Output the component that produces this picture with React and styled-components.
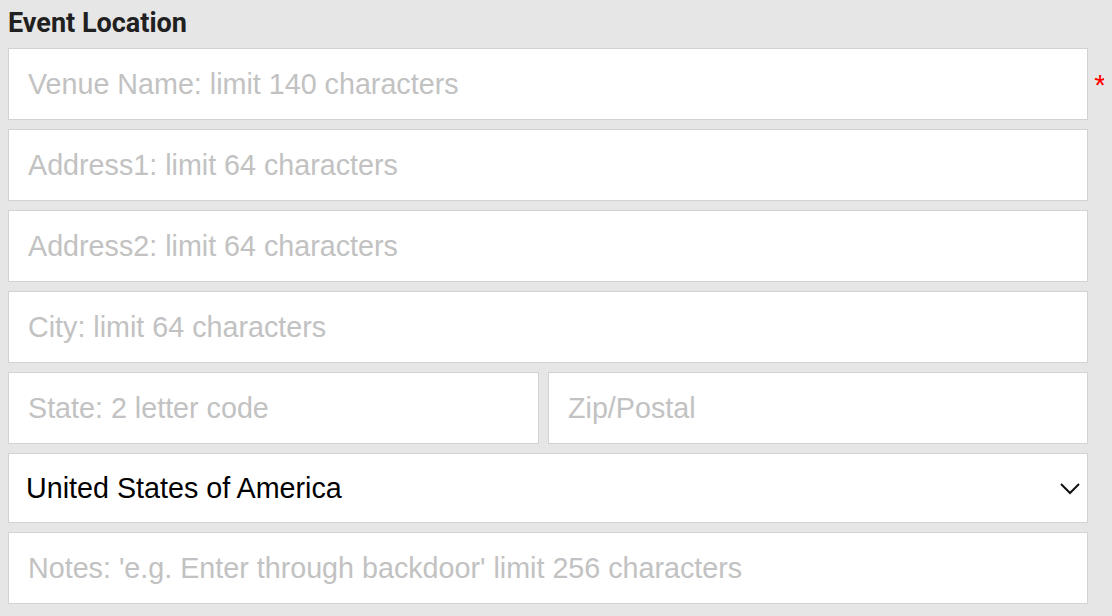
import React from 'react';
import styled, { createGlobalStyle } from 'styled-components';

//ESTILO
const Global = createGlobalStyle`
    body {
        margin: 8px;
        background: #e6e6e6;
        font-family: "Liberation Sans", Arial, sans-serif;
    }
`
const Form = styled.div`
    display: flex;
    flex-direction: column;
    gap: 9px;
    width: 1104px;
`
const Titulo = styled.h3`
    font-family: Roboto, "Liberation Sans", sans-serif;
    font-weight: 700;
    font-size: 27px;
    line-height: 30px;
    color: #202020;
    margin: 0 0 1px 0;
`
const Linha = styled.div`
    display: flex;
    align-items: center;
    gap: 9px;
    padding-right: 24px;
    position: relative;
`
const Campo = styled.input`
    flex: ${props => props.w ? `0 0 ${props.w}px` : 1};
    min-width: 0;
    box-sizing: border-box;
    height: 72px;
    padding: 0 19px;
    border: 1px solid #d2d2d2;
    background: #fff;
    font-family: "Liberation Sans", Arial, sans-serif;
    font-size: 28.7px;
    color: #000;
    outline: 0;

    &::placeholder {
        color: #c2c2c2;
    }
`
const Obrigatorio = styled.span`
    position: absolute;
    right: 6px;
    top: 22px;
    color: #f00;
    font-size: 30px;
    line-height: 30px;
    font-family: "Liberation Sans", Arial, sans-serif;
`
const Caixa = styled.div`
    flex: 1;
    position: relative;
`
const Selecao = styled.select`
    width: 100%;
    box-sizing: border-box;
    height: 70px;
    padding: 0 17px;
    border: 1px solid #d2d2d2;
    background: #fff;
    font-family: "Liberation Sans", Arial, sans-serif;
    font-size: 28.7px;
    color: #000;
    appearance: none;
    outline: 0;
`
const Seta = styled.svg`
    position: absolute;
    right: 8px;
    top: 29px;
    pointer-events: none;
`

//COMPONENTE
export default function App() {
    return (
        <>
            <Global />
            <Form>
                <Titulo>Event Location</Titulo>
                <Linha>
                    <Campo placeholder="Venue Name: limit 140 characters" />
                    <Obrigatorio>*</Obrigatorio>
                </Linha>
                <Linha>
                    <Campo placeholder="Address1: limit 64 characters" />
                </Linha>
                <Linha>
                    <Campo placeholder="Address2: limit 64 characters" />
                </Linha>
                <Linha>
                    <Campo placeholder="City: limit 64 characters" />
                </Linha>
                <Linha>
                    <Campo w={531} placeholder="State: 2 letter code" />
                    <Campo placeholder="Zip/Postal" />
                </Linha>
                <Linha>
                    <Caixa>
                        <Selecao defaultValue="US">
                            <option value="US">United States of America</option>
                        </Selecao>
                        <Seta width="20" height="14" viewBox="0 0 20 14">
                            <path d="M1 2 L10 11 L19 2" fill="none" stroke="#111" strokeWidth="2" />
                        </Seta>
                    </Caixa>
                </Linha>
                <Linha>
                    <Campo placeholder="Notes: 'e.g. Enter through backdoor' limit 256 characters" />
                </Linha>
            </Form>
        </>
    );
}
